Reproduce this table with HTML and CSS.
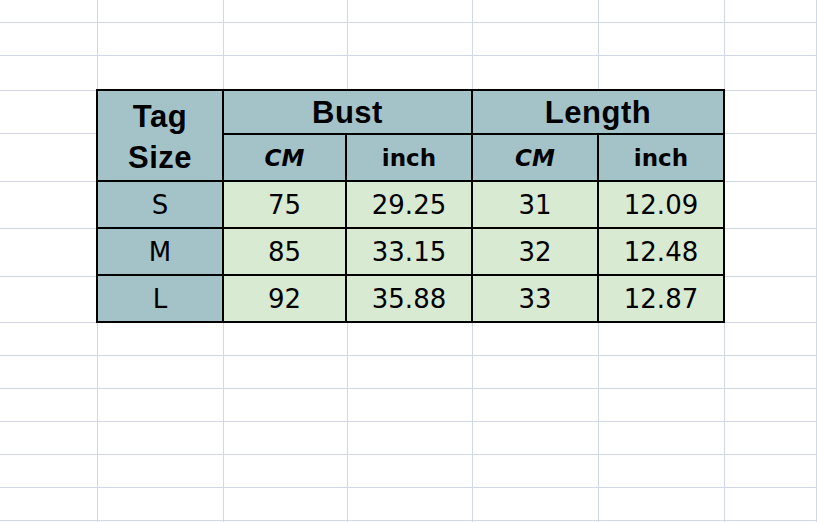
FILE: index.html
```html
<!DOCTYPE html>
<html>
<head>
<meta charset="utf-8">
<link rel="stylesheet" href="styles.css">
</head>
<body>
<div class="sheet">
  <div class="c"></div><div class="c"></div><div class="c"></div><div class="c"></div><div class="c"></div><div class="c"></div><div class="c"></div>
  <div class="c"></div><div class="c"></div><div class="c"></div><div class="c"></div><div class="c"></div><div class="c"></div><div class="c"></div>
  <div class="c"></div><div class="c"></div><div class="c"></div><div class="c"></div><div class="c"></div><div class="c"></div><div class="c"></div>

  <div class="c left r4"></div><div class="c right r4"></div>
  <div class="c left r5"></div><div class="c right r5"></div>
  <div class="c left r6"></div><div class="c right r6"></div>
  <div class="c left r7"></div><div class="c right r7"></div>
  <div class="c left r8"></div><div class="c right r8"></div>

  <div class="size-table">
    <div class="cell head tag">Tag<br>Size</div>
    <div class="cell head group bust">Bust</div>
    <div class="cell head group length">Length</div>
    <div class="cell head unit cm">CM</div>
    <div class="cell head unit">inch</div>
    <div class="cell head unit cm">CM</div>
    <div class="cell head unit">inch</div>

    <div class="cell label">S</div>
    <div class="cell val">75</div>
    <div class="cell val">29.25</div>
    <div class="cell val">31</div>
    <div class="cell val">12.09</div>

    <div class="cell label">M</div>
    <div class="cell val">85</div>
    <div class="cell val">33.15</div>
    <div class="cell val">32</div>
    <div class="cell val">12.48</div>

    <div class="cell label">L</div>
    <div class="cell val">92</div>
    <div class="cell val">35.88</div>
    <div class="cell val">33</div>
    <div class="cell val">12.87</div>
  </div>

  <div class="c"></div><div class="c"></div><div class="c"></div><div class="c"></div><div class="c"></div><div class="c"></div><div class="c"></div>
  <div class="c"></div><div class="c"></div><div class="c"></div><div class="c"></div><div class="c"></div><div class="c"></div><div class="c"></div>
  <div class="c"></div><div class="c"></div><div class="c"></div><div class="c"></div><div class="c"></div><div class="c"></div><div class="c"></div>
  <div class="c"></div><div class="c"></div><div class="c"></div><div class="c"></div><div class="c"></div><div class="c"></div><div class="c"></div>
  <div class="c"></div><div class="c"></div><div class="c"></div><div class="c"></div><div class="c"></div><div class="c"></div><div class="c"></div>
  <div class="c"></div><div class="c"></div><div class="c"></div><div class="c"></div><div class="c"></div><div class="c"></div><div class="c"></div>
  <div class="c"></div><div class="c"></div><div class="c"></div><div class="c"></div><div class="c"></div><div class="c"></div><div class="c"></div>
</div>
</body>
</html>
```

FILE: styles.css
```css
html, body {
  margin: 0;
  padding: 0;
  background: #ffffff;
  overflow: hidden;
}

.sheet {
  width: 817px;
  height: 522px;
  display: grid;
  grid-template-columns: 98px 126px 124px 125px 126px 126px 1fr;
  grid-template-rows: 23px 33px 35px 43px 48px 47px 48px 46px 33px 33px 33px 33px 33px 33px 20px;
  overflow: hidden;
}

.c {
  box-sizing: border-box;
  border-right: 1px solid #d0d7e5;
  border-bottom: 1px solid #d0d7e5;
}

.left { grid-column: 1; }
.right { grid-column: 7; }
.r4 { grid-row: 4; }
.r5 { grid-row: 5; }
.r6 { grid-row: 6; }
.r7 { grid-row: 7; }
.r8 { grid-row: 8; }

.size-table {
  grid-column: 2 / 7;
  grid-row: 4 / 9;
  margin: -2px 0 0 -2px;
  display: grid;
  grid-template-columns: 124px 121px 124px 124px 124px;
  grid-template-rows: 42px 45px 45px 45px 45px;
  gap: 2px;
  padding: 2px;
  background: #000000;
  position: relative;
  z-index: 1;
}

.cell {
  display: flex;
  align-items: center;
  justify-content: center;
  color: #000000;
  white-space: nowrap;
}

.head {
  background: #a4c3c8;
}

.tag {
  grid-row: 1 / 3;
  font-family: "Liberation Sans", Arial, sans-serif;
  font-weight: bold;
  font-size: 31px;
  line-height: 41px;
  text-align: center;
  letter-spacing: 0.5px;
  padding-top: 2px;
}

.group {
  grid-column: span 2;
  font-family: "Liberation Sans", Arial, sans-serif;
  font-weight: bold;
  font-size: 31px;
  letter-spacing: 0.5px;
  padding-top: 1px;
}

.bust { grid-column: 2 / 4; }
.length { grid-column: 4 / 6; }

.unit {
  font-family: "DejaVu Sans", sans-serif;
  font-weight: bold;
  font-size: 23px;
}

.unit.cm {
  font-style: oblique;
}

.label {
  background: #a4c3c8;
  font-family: "DejaVu Sans", sans-serif;
  font-size: 26px;
}

.val {
  background: #d9ead2;
  font-family: "DejaVu Sans", sans-serif;
  font-size: 26px;
}
```
